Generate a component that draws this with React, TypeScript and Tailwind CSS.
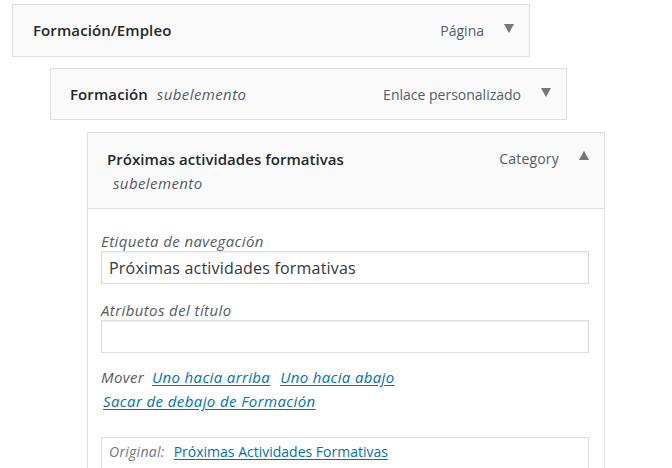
import React from "react";

const font = { fontFamily: '"Open Sans", "Noto Sans", "Liberation Sans", sans-serif' };

function Down() {
  return (
    <svg width="10" height="9" viewBox="0 0 10 9" className="block">
      <polygon points="0,0 10,0 5,9" fill="#72777c" />
    </svg>
  );
}
function Up() {
  return (
    <svg width="10" height="9" viewBox="0 0 10 9" className="block">
      <polygon points="0,9 10,9 5,0" fill="#72777c" />
    </svg>
  );
}

export default function App() {
  return (
    <div className="w-[672px] h-[468px] overflow-hidden bg-white text-[#23282d]" style={font}>
      <div className="pt-[4px]">
        {/* Item 1 */}
        <div className="ml-[12px] w-[518px] h-[53px] border border-[#dfdfdf] bg-[#fafafa] flex items-center pl-[20px]">
          <span className="text-[15px] font-semibold tracking-[0.1px]">Formación/Empleo</span>
          <span className="flex-1" />
          <span className="text-[14px] text-[#555d66]">Página</span>
          <span className="ml-[20px] mr-[15px] -mt-[4px]"><Down /></span>
        </div>
        {/* Item 2 */}
        <div className="ml-[50px] mt-[11px] w-[517px] h-[52px] border border-[#dfdfdf] bg-[#fafafa] flex items-center pl-[19px]">
          <span className="text-[15px] font-semibold tracking-[0.1px]">Formación</span>
          <span className="ml-[9px] text-[15px] italic text-[#555d66] tracking-[0.4px]">subelemento</span>
          <span className="flex-1" />
          <span className="text-[14px] text-[#555d66]">Enlace personalizado</span>
          <span className="ml-[20px] mr-[15px] -mt-[4px]"><Down /></span>
        </div>
        {/* Item 3 */}
        <div className="ml-[87px] mt-[12px] w-[518px] h-[400px] border border-[#dfdfdf] border-b-0">
          <div className="h-[76px] bg-[#fafafa] border-b border-[#dfdfdf] flex pl-[19px] pt-[15px]">
            <div className="flex flex-col">
              <span className="text-[15px] leading-[22px] font-semibold tracking-[0.05px]">Próximas actividades formativas</span>
              <span className="ml-[6px] mt-[2px] text-[15px] leading-[22px] italic text-[#555d66] tracking-[0.4px]">subelemento</span>
            </div>
            <span className="flex-1" />
            <span className="text-[14px] leading-[22px] text-[#555d66] tracking-[0.2px]">Category</span>
            <span className="ml-[20px] mr-[15px] mt-[3px]"><Up /></span>
          </div>
          <div className="pl-[13px] pr-[15px] pt-[22px]">
            <div className="text-[15px] leading-[20px] italic text-[#555d66] tracking-[0.4px]">Etiqueta de navegación</div>
            <div className="h-[33px] border border-[#dddddd] shadow-[inset_0_1px_2px_rgba(0,0,0,0.07)] flex items-center pl-[7px] text-[16px] text-[#32373c] tracking-[0.2px]">
              Próximas actividades formativas
            </div>
            <div className="mt-[16px] text-[15px] leading-[20px] italic text-[#555d66] tracking-[0.4px]">Atributos del título</div>
            <div className="h-[33px] border border-[#dddddd] shadow-[inset_0_1px_2px_rgba(0,0,0,0.07)]" />
            <div className="mt-[14px] text-[15px] leading-[20px] italic tracking-[0.35px] flex">
              <span className="text-[#555d66]">Mover</span>
              <a className="ml-[8px] text-[#0073aa] underline underline-offset-2">Uno hacia arriba</a>
              <a className="ml-[10px] text-[#0073aa] underline underline-offset-2">Uno hacia abajo</a>
            </div>
            <div className="mt-[4px] ml-[2px] text-[15px] leading-[20px] italic tracking-[0.4px]">
              <a className="text-[#0073aa] underline underline-offset-2">Sacar de debajo de Formación</a>
            </div>
            <div className="mt-[26px] h-[60px] border border-[#dddddd] pl-[7px] pt-[4px] text-[14px] leading-[20px] flex">
              <span className="italic text-[#72777c] tracking-[0.3px]">Original:</span>
              <a className="ml-[9px] text-[#0073aa] underline underline-offset-2">Próximas Actividades Formativas</a>
            </div>
          </div>
        </div>
      </div>
    </div>
  );
}
